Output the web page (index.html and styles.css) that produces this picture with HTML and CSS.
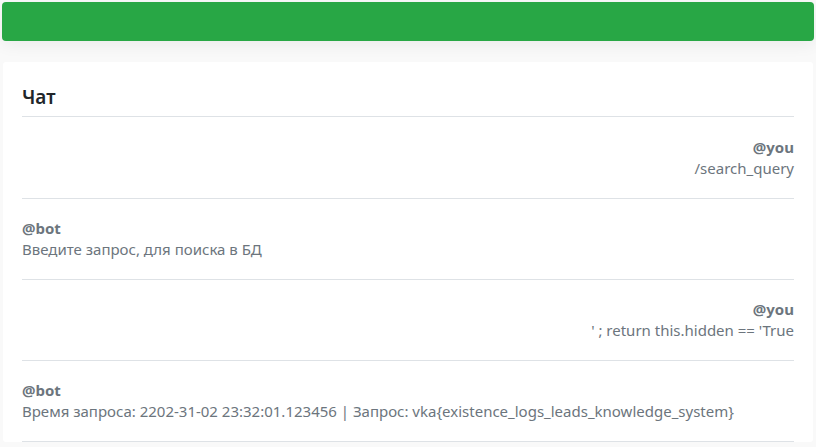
FILE: index.html
```html
<!DOCTYPE html>
<html lang="ru">
<head>
<meta charset="utf-8">
<title>Чат</title>
<link rel="stylesheet" href="styles.css">
</head>
<body>
<div class="topbar"></div>
<main class="card">
  <h5 class="card-title">Чат</h5>
  <div class="messages">
    <div class="msg msg-you">
      <div class="author">@you</div>
      <div class="text">/search_query</div>
    </div>
    <div class="msg">
      <div class="author">@bot</div>
      <div class="text">Введите запрос, для поиска в БД</div>
    </div>
    <div class="msg msg-you">
      <div class="author">@you</div>
      <div class="text">' ; return this.hidden == 'True</div>
    </div>
    <div class="msg">
      <div class="author">@bot</div>
      <div class="text">Время запроса: 2202-31-02 23:32:01.123456 | Запрос: vka{existence_logs_leads_knowledge_system}</div>
    </div>
  </div>
</main>
</body>
</html>
```
FILE: styles.css
```css
html, body {
  margin: 0;
  padding: 0;
}
body {
  background: #f9f9f9;
  font-family: "Noto Sans", "Open Sans", sans-serif;
  font-size: 15px;
  line-height: 21px;
  color: #6c757d;
  padding: 2px 2px 0 2px;
}
.topbar {
  height: 39px;
  background: #28a745;
  border-radius: 4px;
  box-shadow: 0 4px 16px rgba(0, 0, 0, 0.06);
}
.card {
  margin: 21px 1px 0 1px;
  background: #fff;
  padding: 24px 19px 0 19px;
  border-radius: 3px;
}
.card-title {
  margin: 0 0 8px 0;
  font-size: 19px;
  line-height: 22px;
  font-weight: 600;
  color: #212529;
}
.messages {
  border-top: 1px solid #dee2e6;
}
.msg {
  padding: 19px 0 19px 0;
  border-bottom: 1px solid #dee2e6;
}
.msg:first-child {
  padding-top: 20px;
}
.msg-you {
  text-align: right;
}
.author {
  font-weight: 700;
}
```
